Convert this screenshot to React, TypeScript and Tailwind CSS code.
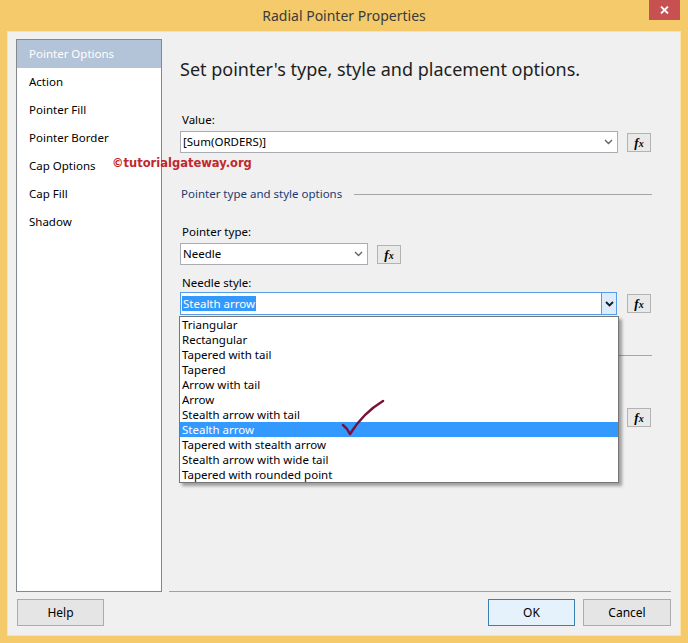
import React from 'react';

const FONT = { fontFamily: '"Noto Sans", "Open Sans", Arial, sans-serif' };

const SIDEBAR = ['Pointer Options', 'Action', 'Pointer Fill', 'Pointer Border', 'Cap Options', 'Cap Fill', 'Shadow'];

const NEEDLE_STYLES = [
  'Triangular',
  'Rectangular',
  'Tapered with tail',
  'Tapered',
  'Arrow with tail',
  'Arrow',
  'Stealth arrow with tail',
  'Stealth arrow',
  'Tapered with stealth arrow',
  'Stealth arrow with wide tail',
  'Tapered with rounded point',
];

function Chevron({ dark }: { dark?: boolean }) {
  return (
    <svg width="9" height="6" viewBox="0 0 9 6" className="shrink-0">
      <path d="M1 1 L4.5 4.5 L8 1" fill="none" stroke={dark ? '#1a1a1a' : '#606060'} strokeWidth={dark ? 1.8 : 1.3} />
    </svg>
  );
}

function FxButton({ className = '' }: { className?: string }) {
  return (
    <div
      className={`flex h-[19px] w-[24px] shrink-0 items-center justify-center border border-[#b3b3b3] bg-[#e9e9e9] ${className}`}
    >
      <span className="text-[13px] font-bold italic leading-none text-black" style={{ fontFamily: '"Liberation Serif", serif' }}>
        f<span className="text-[10px]">x</span>
      </span>
    </div>
  );
}

function Select({ value, width }: { value: string; width: string }) {
  return (
    <div className={`flex h-[22px] items-center justify-between border border-[#abadb3] bg-white pl-[2px] pr-[4px] ${width}`}>
      <span className="text-[11.5px] leading-none text-black">{value}</span>
      <Chevron />
    </div>
  );
}

export default function App() {
  return (
    <div className="relative flex h-[643px] w-[688px] flex-col bg-[#f5ca6b] text-black" style={FONT}>
      <div className="relative flex h-[31px] items-center justify-center">
        <span className="text-[14px] text-[#3b3b3b]">Radial Pointer Properties</span>
        <div className="absolute right-[8px] top-0 flex h-[20px] w-[31px] items-center justify-center bg-[#c75050]">
          <svg width="9" height="8" viewBox="0 0 9 8">
            <path d="M1 0.5 L8 7.5 M8 0.5 L1 7.5" stroke="#fff" strokeWidth="1.8" />
          </svg>
        </div>
      </div>

      <div className="mx-[7px] mb-[7px] flex flex-1 flex-col border border-[#fbe3a8] bg-[#f0f0f0]">
        <div className="flex pl-[8px] pt-[7px]">
          <div className="h-[553px] w-[146px] border border-[#828790] bg-white">
            {SIDEBAR.map((item, i) => (
              <div
                key={item}
                className={`flex h-[28px] items-center pl-[12px] text-[11.5px] ${i === 0 ? 'bg-[#b3c4d8] text-white' : 'text-black'}`}
              >
                {item}
              </div>
            ))}
          </div>

          <div className="relative ml-[7px] flex h-[553px] w-[502px] flex-col border-b border-[#a0a0a0] pl-[11px]">
            <div className="mt-[17px] h-[26px] text-[18px] leading-[26px] text-[#1e1e1e]">
              Set pointer&apos;s type, style and placement options.
            </div>

            <div className="mt-[30px] h-[16px] pl-[2px] text-[11.5px] leading-[16px]">Value:</div>
            <div className="mt-[3px] flex items-center">
              <Select value="[Sum(ORDERS)]" width="w-[438px]" />
              <FxButton className="ml-[9px]" />
            </div>

            <div className="mt-[33px] flex h-[16px] w-[472px] items-center pl-[1px]">
              <span className="text-[11.5px] leading-[16px] text-[#1f3a70]">Pointer type and style options</span>
              <div className="ml-[12px] h-px flex-1 bg-[#a6a6a6]" />
            </div>

            <div className="mt-[22px] h-[16px] pl-[2px] text-[11.5px] leading-[16px]">Pointer type:</div>
            <div className="mt-[3px] flex items-center">
              <Select value="Needle" width="w-[188px]" />
              <FxButton className="ml-[9px]" />
            </div>

            <div className="mt-[10px] h-[16px] pl-[2px] text-[11.5px] leading-[16px]">Needle style:</div>
            <div className="mt-[1px] flex items-center">
              <div className="flex h-[23px] w-[437px] items-center justify-between border border-[#569de5] bg-white pl-[1px]">
                <span className="bg-[#3399ff] px-[1px] text-[11.5px] leading-[15px] text-white">Stealth arrow</span>
                <div className="flex h-full w-[15px] items-center justify-center border-l border-[#569de5] bg-[#dcecfc]">
                  <Chevron dark />
                </div>
              </div>
              <FxButton className="ml-[10px]" />
            </div>

            <div className="mt-[40px] h-px w-[472px] bg-[#a6a6a6]" />

            <div className="mt-[50px] flex items-center">
              <Select value="" width="w-[438px]" />
              <FxButton className="ml-[9px]" />
            </div>

            <div className="absolute left-[10px] top-[277px] w-[440px] border border-[#767676] bg-white shadow-[3px_3px_3px_rgba(0,0,0,0.35)]">
              {NEEDLE_STYLES.map((item) => (
                <div
                  key={item}
                  className={`h-[15px] overflow-hidden pl-[2px] text-[11.5px] leading-[15px] ${item === 'Stealth arrow' ? 'bg-[#3399ff] text-white' : 'text-black'}`}
                >
                  {item}
                </div>
              ))}
            </div>

            <svg className="absolute left-[170px] top-[358px]" width="50" height="42" viewBox="0 0 50 42">
              <path
                d="M4 28 Q8 31 11 37 Q24 16 44 4"
                fill="none"
                stroke="#7b1236"
                strokeWidth="2.6"
                strokeLinecap="round"
                strokeLinejoin="round"
              />
            </svg>
          </div>
        </div>

        <div className="mt-[7px] flex items-center pl-[9px] pr-[9px]">
          <button className="h-[27px] w-[87px] border border-[#acacac] bg-[#e5e5e5] text-[12px]">Help</button>
          <div className="flex-1" />
          <button className="h-[27px] w-[87px] border border-[#3c7fb1] bg-[#e5f1fb] text-[12px]">OK</button>
          <button className="ml-[8px] h-[27px] w-[88px] border border-[#acacac] bg-[#e5e5e5] text-[12px]">Cancel</button>
        </div>
      </div>

      <div
        className="absolute left-[112px] top-[155px] text-[11.5px] font-bold leading-[16px] text-[#c0282d]"
        style={{ fontFamily: '"DejaVu Sans", Verdana, sans-serif' }}
      >
        ©tutorialgateway.org
      </div>
    </div>
  );
}
